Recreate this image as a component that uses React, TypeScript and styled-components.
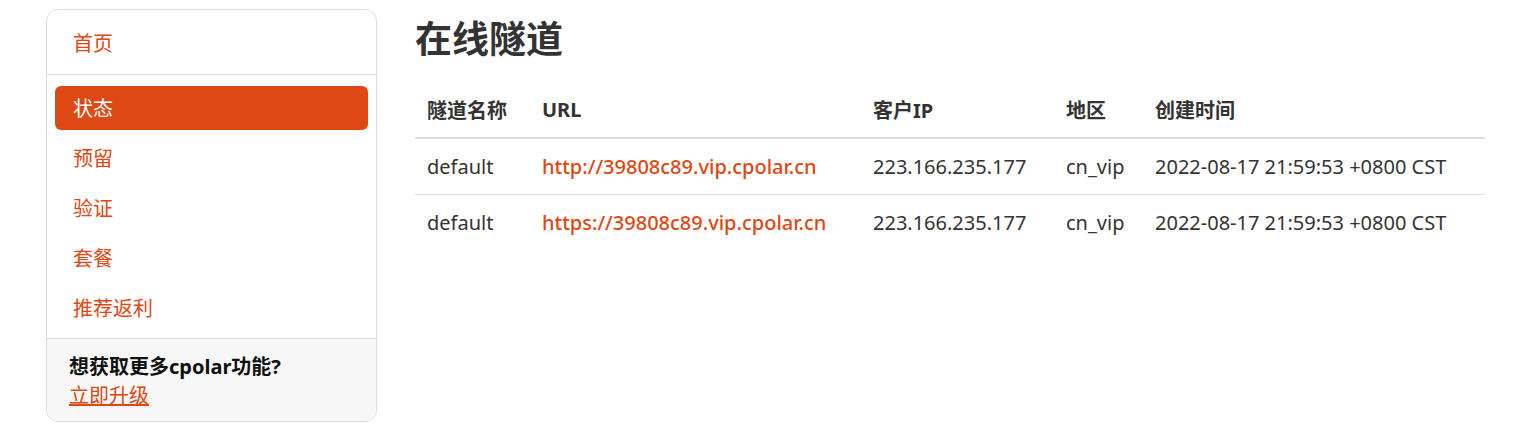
import React from "react";
import styled, { createGlobalStyle } from "styled-components";

const Global = createGlobalStyle`
  html, body { margin: 0; padding: 0; background: #fff; }
  body {
    font-family: "Noto Sans", "Noto Sans CJK SC", sans-serif;
    color: #333;
  }
`;

const ORANGE = "#dd4814";

const Page = styled.div`
  display: flex;
  align-items: flex-start;
  gap: 38px;
  padding: 9px 52px 0 46px;
`;

const Sidebar = styled.nav`
  flex: 0 0 331px;
  box-sizing: border-box;
  border: 1px solid #dcdcdc;
  border-radius: 12px;
  overflow: hidden;
  display: flex;
  flex-direction: column;
`;

const Section = styled.div<{ $divider?: boolean }>`
  display: flex;
  flex-direction: column;
  gap: 6px;
  padding: 11px 8px 8px;
  border-top: ${(p) => (p.$divider ? "1px solid #dcdcdc" : "none")};
`;

const HomeSection = styled.div`
  height: 64px;
  display: flex;
  align-items: center;
  padding: 0 26px;
`;

const NavLink = styled.a<{ $active?: boolean }>`
  display: flex;
  align-items: center;
  box-sizing: border-box;
  height: 44px;
  padding: 0 18px 2px;
  border-radius: 6px;
  font-size: 20px;
  text-decoration: none;
  color: ${(p) => (p.$active ? "#fff" : ORANGE)};
  background: ${(p) => (p.$active ? ORANGE : "transparent")};
  cursor: pointer;
`;

const HomeLink = styled.a`
  font-size: 20px;
  color: ${ORANGE};
  text-decoration: none;
`;

const Footer = styled.div`
  background: #f7f7f7;
  border-top: 1px solid #dcdcdc;
  padding: 14px 22px 11px;
  display: flex;
  flex-direction: column;
  gap: 2px;
`;

const FooterTitle = styled.div`
  font-size: 20px;
  font-weight: 700;
  color: #111;
  line-height: 27px;
`;

const UpgradeLink = styled.a`
  font-size: 20px;
  line-height: 28px;
  color: ${ORANGE};
  text-decoration: underline;
  align-self: flex-start;
`;

const Main = styled.main`
  flex: 1;
  display: flex;
  flex-direction: column;
`;

const Title = styled.h1`
  margin: 6px 0 21px;
  font-size: 37px;
  line-height: 48px;
  font-weight: 700;
  color: #333;
`;

const Table = styled.table`
  width: 100%;
  border-collapse: collapse;
  table-layout: fixed;
`;

const Th = styled.th<{ $w: number }>`
  box-sizing: border-box;
  width: ${(p) => p.$w}px;
  text-align: left;
  font-size: 20px;
  font-weight: 700;
  color: #333;
  padding: 0 12px 2px;
  height: 54px;
  border-bottom: 2px solid #dcdcdc;
`;

const Td = styled.td`
  font-size: 20px;
  color: #333;
  padding: 0 12px;
  height: 55px;
  white-space: nowrap;
`;

const Row = styled.tr`
  & + & td {
    border-top: 1px solid #dcdcdc;
  }
`;

const UrlLink = styled.a`
  color: ${ORANGE};
  font-weight: 500;
  text-decoration: none;
`;

const rows = [
  { name: "default", url: "http://39808c89.vip.cpolar.cn" },
  { name: "default", url: "https://39808c89.vip.cpolar.cn" },
];

export default function App() {
  return (
    <>
      <Global />
      <Page>
        <Sidebar>
          <HomeSection>
            <HomeLink>首页</HomeLink>
          </HomeSection>
          <Section $divider>
            <NavLink $active>状态</NavLink>
            <NavLink>预留</NavLink>
            <NavLink>验证</NavLink>
            <NavLink>套餐</NavLink>
            <NavLink>推荐返利</NavLink>
          </Section>
          <Footer>
            <FooterTitle>想获取更多cpolar功能?</FooterTitle>
            <UpgradeLink>立即升级</UpgradeLink>
          </Footer>
        </Sidebar>
        <Main>
          <Title>在线隧道</Title>
          <Table>
            <thead>
              <tr>
                <Th $w={115}>隧道名称</Th>
                <Th $w={331}>URL</Th>
                <Th $w={193}>客户IP</Th>
                <Th $w={89}>地区</Th>
                <Th $w={342}>创建时间</Th>
              </tr>
            </thead>
            <tbody>
              {rows.map((r) => (
                <Row key={r.url}>
                  <Td>{r.name}</Td>
                  <Td>
                    <UrlLink>{r.url}</UrlLink>
                  </Td>
                  <Td>223.166.235.177</Td>
                  <Td>cn_vip</Td>
                  <Td>2022-08-17 21:59:53 +0800 CST</Td>
                </Row>
              ))}
            </tbody>
          </Table>
        </Main>
      </Page>
    </>
  );
}
